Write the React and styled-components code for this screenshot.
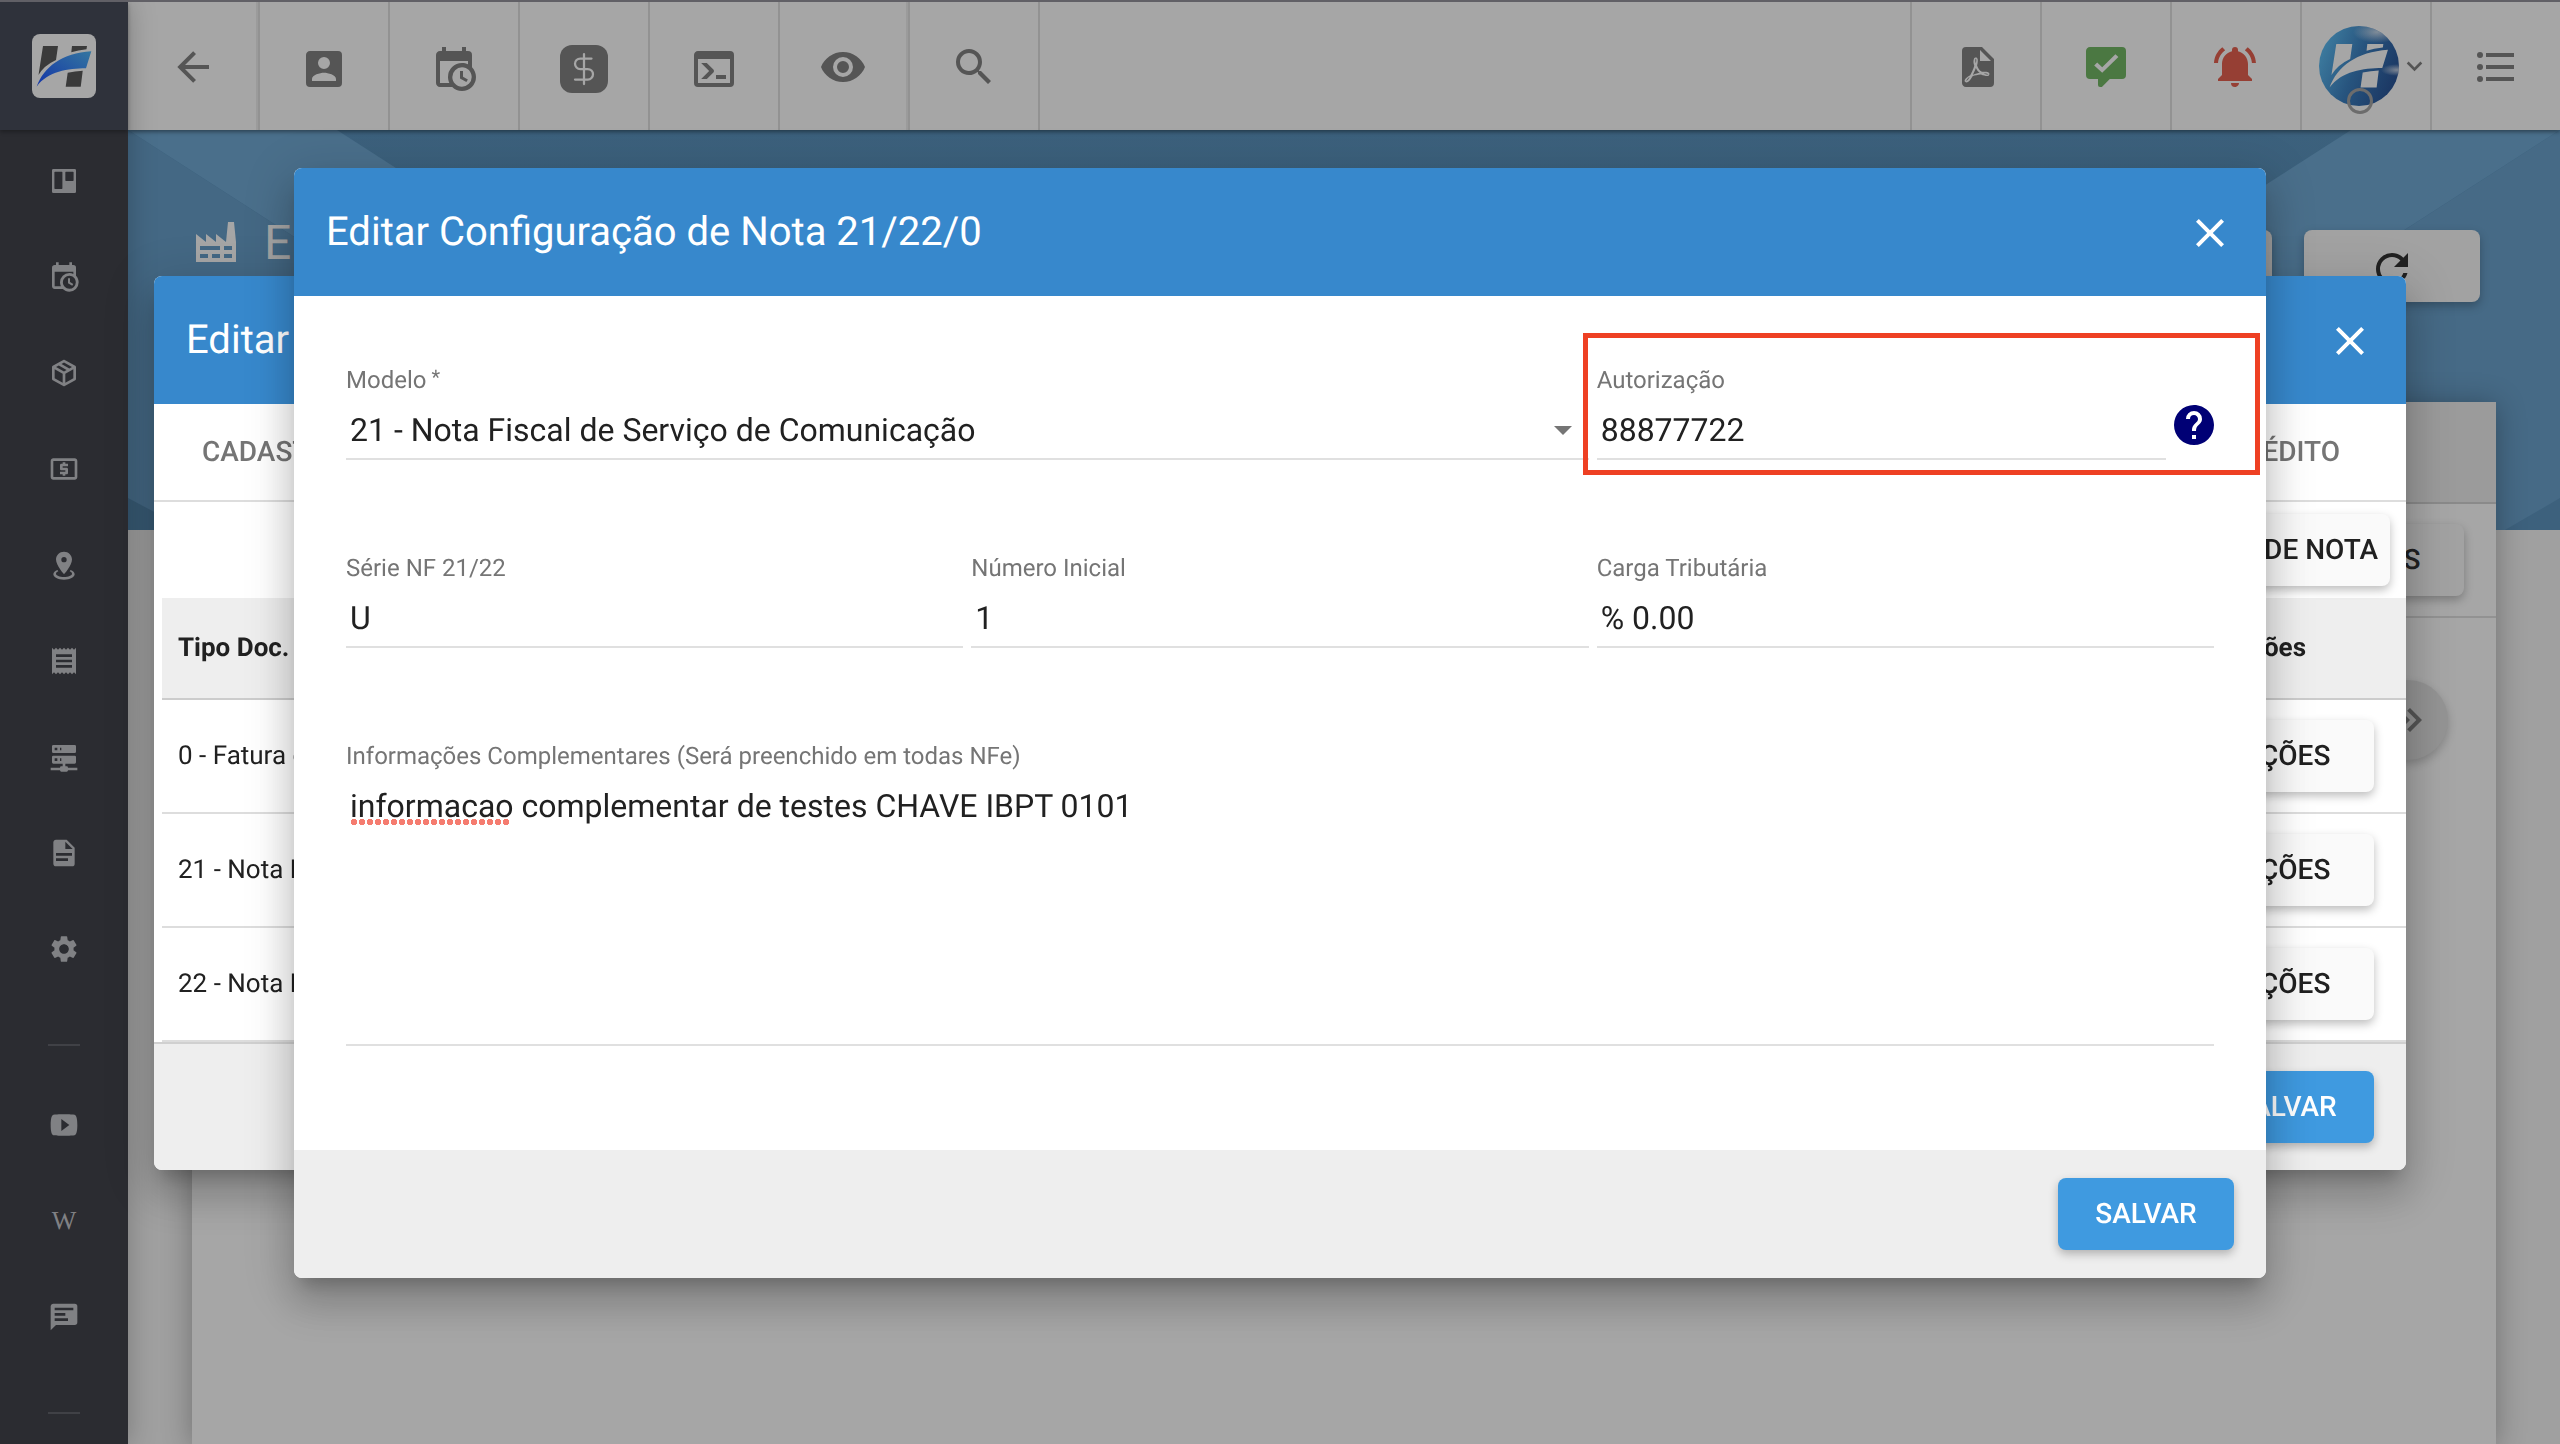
import React, { useState } from "react";
import styled, { createGlobalStyle } from "styled-components";
import { DollarSign } from "lucide-react";
import { MdLocalAtm, MdReceipt, MdSettings } from "react-icons/md";

const GlobalStyle = createGlobalStyle`
  * {
    box-sizing: border-box;
  }
  body {
    margin: 0;
    background: #a0a0a0;
    color: #212121;
    font-family: Roboto, "Liberation Sans", sans-serif;
    font-size: 26px;
    text-rendering: geometricPrecision;
  }
  button, input, select, textarea {
    font-family: inherit;
    color: inherit;
    text-rendering: inherit;
  }
`;

const icons = {
  back: "M20,11V13H8L13.5,18.5L12.08,19.92L4.16,12L12.08,4.08L13.5,5.5L8,11H20Z",
  account:
    "M6,17C6,15 10,13.9 12,13.9C14,13.9 18,15 18,17V18H6M15,9A3,3 0 0,1 12,12A3,3 0 0,1 9,9A3,3 0 0,1 12,6A3,3 0 0,1 15,9M3,5V19A2,2 0 0,0 5,21H19A2,2 0 0,0 21,19V5A2,2 0 0,0 19,3H5C3.89,3 3,3.9 3,5Z",
  calendar:
    "M15,13H16.5V15.82L18.94,17.23L18.19,18.53L15,16.69V13M19,8H5V19H9.67C9.24,18.09 9,17.07 9,16A7,7 0 0,1 16,9C17.07,9 18.09,9.24 19,9.67V8M5,21C3.89,21 3,20.1 3,19V5C3,3.89 3.89,3 5,3H6V1H8V3H16V1H18V3H19A2,2 0 0,1 21,5V11.1C22.24,12.36 23,14.09 23,16A7,7 0 0,1 16,23C14.09,23 12.36,22.24 11.1,21H5M16,11.15A4.85,4.85 0 0,0 11.15,16C11.15,18.68 13.32,20.85 16,20.85A4.85,4.85 0 0,0 20.85,16C20.85,13.32 18.68,11.15 16,11.15Z",
  console:
    "M20,19V7H4V19H20M20,3A2,2 0 0,1 22,5V19A2,2 0 0,1 20,21H4A2,2 0 0,1 2,19V5C2,3.89 2.9,3 4,3H20M13,17V15H18V17H13M9.58,13L5.57,9H8.4L11.7,12.3C12.09,12.69 12.09,13.33 11.7,13.72L8.42,17H5.59L9.58,13Z",
  eye: "M12,9A3,3 0 0,0 9,12A3,3 0 0,0 12,15A3,3 0 0,0 15,12A3,3 0 0,0 12,9M12,17A5,5 0 0,1 7,12A5,5 0 0,1 12,7A5,5 0 0,1 17,12A5,5 0 0,1 12,17M12,4.5C7,4.5 2.73,7.61 1,12C2.73,16.39 7,19.5 12,19.5C17,19.5 21.27,16.39 23,12C21.27,7.61 17,4.5 12,4.5Z",
  search:
    "M9.5,3A6.5,6.5 0 0,1 16,9.5C16,11.11 15.41,12.59 14.44,13.73L14.71,14H15.5L20.5,19L19,20.5L14,15.5V14.71L13.73,14.44C12.59,15.41 11.11,16 9.5,16A6.5,6.5 0 0,1 3,9.5A6.5,6.5 0 0,1 9.5,3M9.5,5C7,5 5,7 5,9.5C5,12 7,14 9.5,14C12,14 14,12 14,9.5C14,7 12,5 9.5,5Z",
  pdf: "M14,9H19.5L14,3.5V9M7,2H15L21,8V20A2,2 0 0,1 19,22H7C5.89,22 5,21.1 5,20V4A2,2 0 0,1 7,2M11.93,12.44C12.34,13.34 12.86,14.08 13.46,14.59L13.87,14.91C13,15.07 11.8,15.35 10.53,15.84V15.84L10.42,15.88L10.92,14.84C11.37,13.97 11.7,13.18 11.93,12.44M18.41,16.25C18.59,16.07 18.68,15.84 18.69,15.59C18.72,15.39 18.67,15.2 18.57,15.04C18.28,14.57 17.53,14.35 16.29,14.35L15,14.42L14.13,13.84C13.5,13.32 12.93,12.41 12.53,11.28L12.57,11.14C12.9,9.81 13.21,8.2 12.55,7.54C12.39,7.38 12.17,7.3 11.94,7.3H11.7C11.33,7.3 11,7.69 10.91,8.07C10.54,9.4 10.76,10.13 11.13,11.34V11.35C10.88,12.23 10.56,13.25 10.05,14.28L9.09,16.08L8.2,16.57C7,17.32 6.43,18.16 6.32,18.69C6.28,18.88 6.3,19.05 6.37,19.23L6.4,19.28L6.88,19.59L7.32,19.7C8.13,19.7 9.05,18.75 10.29,16.63L10.47,16.56C11.5,16.23 12.78,16 14.5,15.81C15.53,16.32 16.74,16.55 17.5,16.55C17.94,16.55 18.24,16.44 18.41,16.25M18,15.54L18.09,15.65C18.08,15.75 18.05,15.76 18,15.78H17.96L17.77,15.8C17.31,15.8 16.6,15.61 15.87,15.29C15.96,15.19 16,15.19 16.1,15.19C17.5,15.19 17.9,15.44 18,15.54M8.83,17C8.18,18.19 7.59,18.85 7.14,19C7.19,18.62 7.64,17.96 8.35,17.31L8.83,17M11.85,10.09C11.62,9.19 11.61,8.46 11.78,8.04L11.85,7.92L12,7.97C12.17,8.21 12.19,8.53 12.09,9.07L12.06,9.23L11.9,10.05L11.85,10.09Z",
  check:
    "M9,22A1,1 0 0,1 8,21V18H4A2,2 0 0,1 2,16V4C2,2.89 2.9,2 4,2H20A2,2 0 0,1 22,4V16A2,2 0 0,1 20,18H13.9L10.2,21.71C10,21.9 9.75,22 9.5,22H9M10.1,14.9L18.2,7L16.7,5.6L10.1,12.1L7.6,9.8L6.1,11.2Z",
  bell: "M11.5,22C11.64,22 11.77,22 11.9,21.96C12.55,21.82 13.09,21.38 13.34,20.78C13.44,20.54 13.5,20.27 13.5,20H9.5A2,2 0 0,0 11.5,22M18,10.5C18,7.43 15.86,4.86 13,4.18V3.5A1.5,1.5 0 0,0 11.5,2A1.5,1.5 0 0,0 10,3.5V4.18C7.13,4.86 5,7.43 5,10.5V16L3,18V19H20V18L18,16M19.97,10H21.97C21.82,6.79 20.24,3.97 17.85,2.15L16.42,3.58C18.46,5 19.82,7.35 19.97,10M6.58,3.58L5.15,2.15C2.76,3.97 1.18,6.79 1,10H3C3.18,7.35 4.54,5 6.58,3.58Z",
  down: "M7.41,8.58L12,13.17L16.59,8.58L18,10L12,16L6,10L7.41,8.58Z",
  list: "M7,5H21V7H7V5M7,13V11H21V13H7M4,4.5A1.5,1.5 0 0,1 5.5,6A1.5,1.5 0 0,1 4,7.5A1.5,1.5 0 0,1 2.5,6A1.5,1.5 0 0,1 4,4.5M4,10.5A1.5,1.5 0 0,1 5.5,12A1.5,1.5 0 0,1 4,13.5A1.5,1.5 0 0,1 2.5,12A1.5,1.5 0 0,1 4,10.5M7,19V17H21V19H7M4,16.5A1.5,1.5 0 0,1 5.5,18A1.5,1.5 0 0,1 4,19.5A1.5,1.5 0 0,1 2.5,18A1.5,1.5 0 0,1 4,16.5Z",
  close:
    "M19,6.41L17.59,5L12,10.59L6.41,5L5,6.41L10.59,12L5,17.59L6.41,19L12,13.41L17.59,19L19,17.59L13.41,12L19,6.41Z",
  refresh:
    "M17.65,6.35C16.2,4.9 14.21,4 12,4A8,8 0 0,0 4,12A8,8 0 0,0 12,20C15.73,20 18.84,17.45 19.73,14H17.65C16.83,16.33 14.61,18 12,18A6,6 0 0,1 6,12A6,6 0 0,1 12,6C13.66,6 15.14,6.69 16.22,7.78L13,11H20V4L17.65,6.35Z",
  factory:
    "M4,18V20H8V18H4M4,14V16H14V14H4M10,18V20H14V18H10M16,14V16H20V14H16M16,18V20H20V18H16M2,22V8L7,12V8L12,12V8L17,12L18,2H21L22,12V22H2Z",
  help: "M15.07,11.25L14.17,12.17C13.45,12.89 13,13.5 13,15H11V14.5C11,13.39 11.45,12.39 12.17,11.67L13.41,10.41C13.78,10.05 14,9.55 14,9C14,7.89 13.1,7 12,7A2,2 0 0,0 10,9H8A4,4 0 0,1 12,5A4,4 0 0,1 16,9C16,9.88 15.64,10.67 15.07,11.25M13,19H11V17H13M12,2A10,10 0 0,0 2,12A10,10 0 0,0 12,22A10,10 0 0,0 22,12C22,6.47 17.5,2 12,2Z",
  next: "M5.59,7.41L7,6L13,12L7,18L5.59,16.59L10.17,12L5.59,7.41M11.59,7.41L13,6L19,12L13,18L11.59,16.59L16.17,12L11.59,7.41Z",
  board:
    "M4,3H20A1,1 0 0,1 21,4V20A1,1 0 0,1 20,21H4A1,1 0 0,1 3,20V4A1,1 0 0,1 4,3M5.3,5A.5,.5 0 0,0 4.8,5.5V17.5A.5,.5 0 0,0 5.3,18H10.3A.5,.5 0 0,0 10.8,17.5V5.5A.5,.5 0 0,0 10.3,5H5.3M13.5,5A.5,.5 0 0,0 13,5.5V11.5A.5,.5 0 0,0 13.5,12H18.7A.5,.5 0 0,0 19.2,11.5V5.5A.5,.5 0 0,0 18.7,5H13.5Z",
  box: "M21,16.5C21,16.88 20.79,17.21 20.47,17.38L12.57,21.82C12.41,21.94 12.21,22 12,22C11.79,22 11.59,21.94 11.43,21.82L3.53,17.38C3.21,17.21 3,16.88 3,16.5V7.5C3,7.12 3.21,6.79 3.53,6.62L11.43,2.18C11.59,2.06 11.79,2 12,2C12.21,2 12.41,2.06 12.57,2.18L20.47,6.62C20.79,6.79 21,7.12 21,7.5V16.5M12,4.15L10.11,5.22L16,8.61L17.96,7.5L12,4.15M6.04,7.5L12,10.85L13.96,9.75L8.08,6.35L6.04,7.5M5,15.91L11,19.29V12.58L5,9.21V15.91M19,15.91V9.21L13,12.58V19.29L19,15.91Z",
  marker:
    "M12,2C15.31,2 18,4.66 18,7.95C18,12.41 12,19 12,19C12,19 6,12.41 6,7.95C6,4.66 8.69,2 12,2M12,6A2,2 0 0,0 10,8A2,2 0 0,0 12,10A2,2 0 0,0 14,8A2,2 0 0,0 12,6M20,19C20,21.21 16.42,23 12,23C7.58,23 4,21.21 4,19C4,17.71 5.22,16.56 7.11,15.83L7.75,16.74C6.67,17.19 6,17.81 6,18.5C6,19.88 8.69,21 12,21C15.31,21 18,19.88 18,18.5C18,17.81 17.33,17.19 16.25,16.74L16.89,15.83C18.78,16.56 20,17.71 20,19Z",
  server:
    "M13,19H14A1,1 0 0,1 15,20H22V22H15A1,1 0 0,1 14,23H10A1,1 0 0,1 9,22H2V20H9A1,1 0 0,1 10,19H11V17H4A1,1 0 0,1 3,16V12A1,1 0 0,1 4,11H20A1,1 0 0,1 21,12V16A1,1 0 0,1 20,17H13V19M4,3H20A1,1 0 0,1 21,4V8A1,1 0 0,1 20,9H4A1,1 0 0,1 3,8V4A1,1 0 0,1 4,3M9,7H10V5H9V7M9,15H10V13H9V15M5,5V7H7V5H5M5,13V15H7V13H5Z",
  document:
    "M13,9H18.5L13,3.5V9M6,2H14L20,8V20A2,2 0 0,1 18,22H6C4.89,22 4,21.1 4,20V4C4,2.89 4.89,2 6,2M15,18V16H6V18H15M18,14V12H6V14H18Z",
  video:
    "M10,16.5V7.5L16,12M20,4.4C19.4,4.2 15.7,4 12,4C8.3,4 4.6,4.19 4,4.38C2.44,4.9 2,8.4 2,12C2,15.59 2.44,19.1 4,19.61C4.6,19.81 8.3,20 12,20C15.7,20 19.4,19.81 20,19.61C21.56,19.1 22,15.59 22,12C22,8.4 21.56,4.91 20,4.4Z",
  message:
    "M20,2A2,2 0 0,1 22,4V16A2,2 0 0,1 20,18H6L2,22V4C2,2.89 2.9,2 4,2H20M5,5V7H19V5H5M5,9V11H13V9H5M5,13V15H15V13H5Z",
};

const Icon = ({ name, size = 48, viewBox = "0 0 24 24" }) => (
  <svg
    width={size}
    height={size}
    viewBox={viewBox}
    fill="currentColor"
    fillRule="evenodd"
    aria-hidden="true"
  >
    <path d={icons[name]} />
  </svg>
);

const LogoShape = ({ legs, swoosh }) => (
  <>
    <g fill={legs}>
      <path d="M11 12H26L24 26Q12 31.500 6.500 41Z" />
      <path d="M40 12H55L54.500 15.300Q46 16.200 39.300 18.300Z" />
      <path d="M35.700 38.700Q43 37.200 50.700 36.700L48.700 52.700H33.700Z" />
    </g>
    <path
      fill={swoosh}
      d="M4.700 52.700C12 32.500 30 19.500 59.300 17.300L54 34.300C36 34.500 16 37 4.700 52.700Z"
    />
  </>
);

const Page = styled.div`
  display: grid;
  grid-template-columns: 128px 1fr;
  height: 100vh;
  overflow: hidden;
  border-top: 2px solid #616066;
`;

const Sidebar = styled.aside`
  position: relative;
  z-index: 2;
  background: #2b2c31;
  color: #808184;
  box-shadow: 0 0 26px rgba(0, 0, 0, 0.25);
`;

const Brand = styled.a`
  display: flex;
  align-items: center;
  justify-content: center;
  height: 128px;
  background: #2f323b;
  box-shadow: 0 2px 4px rgba(0, 0, 0, 0.3);
`;

const BrandLogo = styled.svg`
  width: 64px;
  height: 64px;
  border-radius: 8px;
  background: #a6a6a6;
`;

const SideLink = styled.a`
  display: flex;
  align-items: center;
  justify-content: center;
  height: 96px;
  color: inherit;
  text-decoration: none;
  font: 26px "Liberation Serif", serif;
`;

const SideNav = styled.nav`
  padding-top: 3px;
`;

const SideDivider = styled.hr`
  width: 32px;
  height: 2px;
  margin: 47px auto 31px;
  border: 0;
  background: #404146;
`;

const Main = styled.main`
  display: flex;
  flex-direction: column;
  min-width: 0;
`;

const Topbar = styled.header`
  position: relative;
  z-index: 1;
  display: flex;
  justify-content: space-between;
  height: 128px;
  flex: none;
  padding-left: 2px;
  background: #a6a6a6;
  color: #555;
  box-shadow: 0 2px 4px rgba(0, 0, 0, 0.4);
`;

const BarGroup = styled.div`
  display: flex;
`;

const BarButton = styled.button`
  display: flex;
  align-items: center;
  justify-content: center;
  width: 130px;
  height: 128px;
  padding: ${(p) => (p.$low ? "6px 0 0" : p.$raised ? "2px 2px 0 0" : "2px 0 0")};
  border: 0 solid #929292;
  border-width: ${(p) => (p.$end ? "0 0 0 2px" : "0 2px 0 0")};
  background: none;
  color: ${(p) => p.$color || "inherit"};
  box-shadow: ${(p) => (p.$raised ? "inset -2px 0 0 #9b9b9b" : "none")};
`;

const DollarBadge = styled.span`
  display: flex;
  align-items: center;
  justify-content: center;
  width: 48px;
  height: 48px;
  border-radius: 12px;
  background: #555;
  color: #a6a6a6;
`;

const Profile = styled(BarButton)`
  position: relative;
  justify-content: flex-start;
  padding: 0 0 0 17px;
`;

const Avatar = styled.svg`
  flex: none;
  width: 80px;
  height: 80px;
  border-radius: 50%;
`;

const Status = styled.span`
  position: absolute;
  left: 45px;
  bottom: 16px;
  width: 26px;
  height: 26px;
  border: 3px solid #6c6c6c;
  border-radius: 50%;
`;

const Hero = styled.section`
  position: relative;
  height: 400px;
  flex: none;
  background: linear-gradient(#3c617d, #33536a);
`;

const HeroArt = styled.svg`
  position: absolute;
  inset: 0;
  width: 100%;
  height: 100%;
`;

const HeroBar = styled.div`
  position: relative;
  display: flex;
  justify-content: space-between;
  padding: 100px 80px 0 64px;
`;

const PageTitle = styled.h1`
  display: flex;
  align-items: center;
  gap: 24px;
  height: 24px;
  margin: 0;
  color: #a6a6a6;
  font-size: 48px;
  font-weight: 400;
`;

const Actions = styled.div`
  display: flex;
  gap: 32px;
`;

const Button = styled.button`
  display: inline-flex;
  align-items: center;
  justify-content: center;
  min-width: 176px;
  height: 72px;
  padding: ${(p) => (p.$icon ? "6px 12px 0" : "0 12px 2px")};
  border: 0;
  border-radius: 8px;
  background: ${(p) => (p.$primary ? "#3f9ae0" : p.$dim ? "#a2a2a2" : "#fafafa")};
  color: ${(p) => (p.$primary ? "#fff" : "#212121")};
  box-shadow: 0 4px 10px rgba(0, 0, 0, 0.26);
  font-size: 28px;
  font-weight: 500;
`;

const Card = styled.section`
  position: relative;
  flex: 1;
  margin: -128px 64px 0;
  background: #a6a6a6;
  box-shadow: 0 2px 28px rgba(0, 0, 0, 0.3);
`;

const CardTabs = styled.div`
  height: 102px;
  border-bottom: 2px solid #8a8a8a;
  background: #9b9b9b;
`;

const CardTools = styled.div`
  display: flex;
  justify-content: flex-end;
  padding: 20px 32px;
  border-bottom: 2px solid #929292;
`;

const CardPager = styled.div`
  display: flex;
  justify-content: flex-end;
  padding: 62px 48px;
`;

const RoundButton = styled.button`
  display: flex;
  align-items: center;
  justify-content: center;
  width: 80px;
  height: 80px;
  padding: 0;
  border: 0;
  border-radius: 50%;
  background: #949494;
  color: #555;
  box-shadow: 0 4px 10px rgba(0, 0, 0, 0.2);
`;

const Overlay = styled.div`
  position: fixed;
  inset: 2px 0 0;
  z-index: 3;
  display: flex;
  align-items: center;
  padding: 0 ${(p) => p.$side}px;
`;

const Dialog = styled.div`
  flex: 1;
  overflow: hidden;
  border-radius: 8px;
  background: #fff;
  box-shadow: 0 14px 16px -8px rgba(0, 0, 0, 0.2),
    0 26px 38px 4px rgba(0, 0, 0, 0.14), 0 10px 48px 8px rgba(0, 0, 0, 0.12);
`;

const DialogHeader = styled.header`
  display: flex;
  align-items: center;
  justify-content: space-between;
  height: 128px;
  padding: 0 32px;
  background: #3788cc;
  color: #fff;
`;

const DialogTitle = styled.h2`
  margin: 0;
  padding-bottom: 2px;
  font-size: 40px;
  font-weight: 400;
`;

const CloseButton = styled.button`
  display: flex;
  padding: 2px 0 0;
  border: 0;
  background: none;
`;

const DialogFooter = styled.footer`
  display: flex;
  align-items: center;
  justify-content: flex-end;
  height: 128px;
  padding: 0 32px;
  border-top: ${(p) => (p.$line ? "2px solid #d0d0d0" : "0")};
  background: #eee;
`;

const Tabs = styled.div`
  display: flex;
  justify-content: space-between;
  height: 98px;
  padding: 0 66px 2px 48px;
  border-bottom: 2px solid #ddd;
`;

const Tab = styled.button`
  padding: 0;
  border: 0;
  background: none;
  color: #757575;
  font-size: 28px;
  font-weight: 500;
`;

const TableTools = styled.div`
  display: flex;
  justify-content: flex-end;
  padding: 12px 16px;
`;

const TableArea = styled.div`
  padding-left: 8px;
`;

const Table = styled.table`
  width: 100%;
  border-collapse: separate;
  border-spacing: 0;
  text-align: left;

  th {
    height: 102px;
    padding: 0 16px;
    border-bottom: 2px solid #ccc;
    background: #eee;
  }
  td {
    height: 114px;
    padding: 0 16px;
    border-bottom: 2px solid #ddd;
  }
  th:last-child {
    width: 320px;
    padding-right: 100px;
    text-align: right;
  }
  td:last-child {
    padding-right: 32px;
    text-align: right;
  }
  ${Button} {
    vertical-align: middle;
  }
`;

const Form = styled.form`
  display: grid;
  grid-template-columns: repeat(3, 1fr);
  gap: 92px 8px;
  padding: 68px 52px 104px;
`;

const Field = styled.div`
  position: relative;
  display: flex;
  flex-direction: column;
  grid-column: span ${(p) => p.$span || 1};
  min-width: 0;
`;

const Label = styled.label`
  margin-bottom: 8px;
  color: #757575;
  font-size: 24px;
  line-height: 32px;
`;

const Required = styled.span`
  margin-left: 5px;
  font-size: 20px;
  vertical-align: top;
  line-height: 26px;
`;

const Input = styled.input`
  width: 100%;
  height: 56px;
  padding: 0 4px 2px;
  border: 0;
  border-bottom: 2px solid #e0e0e0;
  border-radius: 0;
  outline: 0;
  background: none;
  font-size: 32px;
`;

const Select = styled(Input)`
  appearance: none;
`;

const TextArea = styled(Input)`
  display: block;
  height: 266px;
  padding-top: 6px;
  line-height: 40px;
  resize: none;
`;

const Control = styled.div`
  position: relative;
  display: flex;
  gap: 8px;
`;

const Caret = styled.span`
  position: absolute;
  right: 17px;
  top: 22px;
  border: 9px solid transparent;
  border-top-color: #757575;
  border-bottom: 0;
  pointer-events: none;
`;

const HelpButton = styled.button`
  flex: none;
  display: flex;
  padding: 1px 0 0;
  border: 0;
  background: none;
  color: #000075;
`;

const Highlight = styled.span`
  position: absolute;
  inset: -31px -46px -15px -14px;
  border: 5px solid #ee4023;
  pointer-events: none;
`;

// dotted spell-check mark under the first word
const SpellMark = styled.span`
  position: absolute;
  left: 4px;
  top: 39px;
  width: 160px;
  height: 6px;
  background: radial-gradient(circle, #f57c70 3px, transparent 3px) 0 0 / 8px
    6px;
  pointer-events: none;
`;

const rows = ["0 - Fatura de Serviço", "21 - Nota Fiscal", "22 - Nota Fiscal"];

const sideIcons = [
  <Icon name="board" size={32} />,
  <Icon name="calendar" size={32} />,
  <Icon name="box" size={32} />,
  <MdLocalAtm size={32} />,
  <Icon name="marker" size={32} />,
  <MdReceipt size={32} />,
  <Icon name="server" size={32} />,
  <Icon name="document" size={32} />,
  <MdSettings size={32} />,
];

const helpIcons = [
  <Icon name="video" size={32} />,
  "W",
  <Icon name="message" size={32} />,
];

const SideBar = () => (
  <Sidebar>
    <Brand href="#" aria-label="Início">
      <BrandLogo viewBox="0 0 64 64">
        <defs>
          <linearGradient id="swoosh" x1="0" y1="1" x2="1" y2="0">
            <stop offset="0" stopColor="#1334a8" />
            <stop offset="1" stopColor="#3476a0" />
          </linearGradient>
        </defs>
        <LogoShape legs="#3a3a3a" swoosh="url(#swoosh)" />
      </BrandLogo>
    </Brand>
    <SideNav>
      {sideIcons.map((icon, i) => (
        <SideLink href="#" key={i}>
          {icon}
        </SideLink>
      ))}
      <SideDivider />
      {helpIcons.map((icon, i) => (
        <SideLink href="#" key={i}>
          {icon}
        </SideLink>
      ))}
      <SideDivider />
    </SideNav>
  </Sidebar>
);

const TopBar = () => (
  <Topbar>
    <BarGroup>
      <BarButton $raised aria-label="Voltar">
        <Icon name="back" />
      </BarButton>
      <BarButton $low aria-label="Clientes">
        <Icon name="account" />
      </BarButton>
      <BarButton $low aria-label="Agenda">
        <Icon name="calendar" />
      </BarButton>
      <BarButton $low aria-label="Financeiro">
        <DollarBadge>
          <DollarSign size={36} strokeWidth={1.5} />
        </DollarBadge>
      </BarButton>
      <BarButton $low aria-label="Console">
        <Icon name="console" />
      </BarButton>
      <BarButton $raised aria-label="Visualizar">
        <Icon name="eye" />
      </BarButton>
      <BarButton aria-label="Buscar">
        <Icon name="search" />
      </BarButton>
    </BarGroup>
    <BarGroup>
      <BarButton $end aria-label="PDF">
        <Icon name="pdf" />
      </BarButton>
      <BarButton $end $color="#4b7842" aria-label="Mensagens">
        <Icon name="check" />
      </BarButton>
      <BarButton $end $color="#963f34" aria-label="Notificações">
        <Icon name="bell" />
      </BarButton>
      <Profile $end aria-label="Perfil">
        <Avatar viewBox="0 0 80 80">
          <defs>
            <linearGradient id="globe" x1="0" y1="0.2" x2="1" y2="0.6">
              <stop offset="0" stopColor="#3f7fa2" />
              <stop offset="0.5" stopColor="#27547e" />
              <stop offset="1" stopColor="#1b3763" />
            </linearGradient>
            <radialGradient id="glow">
              <stop offset="0" stopColor="#a6a6a6" stopOpacity="0.7" />
              <stop offset="1" stopColor="#a6a6a6" stopOpacity="0" />
            </radialGradient>
          </defs>
          <rect width="80" height="80" fill="url(#globe)" />
          <ellipse cx="58" cy="6" rx="24" ry="11" fill="url(#glow)" />
          <ellipse cx="78" cy="44" rx="16" ry="6" fill="url(#glow)" />
          <g transform="translate(5.5 5.2) scale(1.07)">
            <LogoShape legs="#a6a6a6" swoosh="#a6a6a6" />
          </g>
        </Avatar>
        <Icon name="down" size={32} />
        <Status />
      </Profile>
      <BarButton $end aria-label="Menu">
        <Icon name="list" />
      </BarButton>
    </BarGroup>
  </Topbar>
);

const CompanyPage = () => (
  <>
    <Hero>
      <HeroArt viewBox="0 0 2432 400" preserveAspectRatio="none">
        <path fill="#4a6f8b" d="M0 0H209L830 400H622Z" />
        <path fill="#446884" d="M0 0L622 400H0Z" />
        <path fill="#385b75" d="M0 368L60 400H0Z" />
        <path fill="#4a6f8b" d="M2432 0H2223L1600 400H1810Z" />
        <path fill="#466a86" d="M2432 0V400H1810Z" />
        <path fill="#3d617d" d="M2432 368V400H2377Z" />
      </HeroArt>
      <HeroBar>
        <PageTitle>
          <Icon name="factory" />
          Empresas
        </PageTitle>
        <Actions>
          <Button $dim>VOLTAR</Button>
          <Button $dim $icon aria-label="Atualizar">
            <Icon name="refresh" />
          </Button>
        </Actions>
      </HeroBar>
    </Hero>
    <Card>
      <CardTabs />
      <CardTools>
        <Button $dim>AÇÕES</Button>
      </CardTools>
      <CardPager>
        <RoundButton aria-label="Próxima página">
          <Icon name="next" />
        </RoundButton>
      </CardPager>
    </Card>
  </>
);

const CompanyDialog = () => (
  <Overlay $side={154}>
    <Dialog role="dialog" aria-label="Editar Empresa">
      <DialogHeader>
        <DialogTitle>Editar Empresa</DialogTitle>
        <CloseButton aria-label="Fechar">
          <Icon name="close" />
        </CloseButton>
      </DialogHeader>
      <Tabs>
        <Tab>CADASTRO</Tab>
        <Tab>CARTÃO DE CRÉDITO</Tab>
      </Tabs>
      <TableTools>
        <Button>ADICIONAR CONFIGURAÇÃO DE NOTA</Button>
      </TableTools>
      <TableArea>
        <Table>
          <thead>
            <tr>
              <th>Tipo Doc.</th>
              <th>Ações</th>
            </tr>
          </thead>
          <tbody>
            {rows.map((row) => (
              <tr key={row}>
                <td>{row}</td>
                <td>
                  <Button>AÇÕES</Button>
                </td>
              </tr>
            ))}
          </tbody>
        </Table>
      </TableArea>
      <DialogFooter $line>
        <Button $primary>SALVAR</Button>
      </DialogFooter>
    </Dialog>
  </Overlay>
);

const InvoiceDialog = () => {
  const [values, setValues] = useState({
    modelo: "21",
    autorizacao: "88877722",
    serie: "U",
    numero: "1",
    carga: "% 0.00",
    info: "informacao complementar de testes CHAVE IBPT 0101",
  });

  const bind = (id) => ({
    id,
    value: values[id],
    onChange: (e) => setValues({ ...values, [id]: e.target.value }),
  });

  return (
    <Overlay $side={294}>
      <Dialog role="dialog" aria-labelledby="invoice-title">
        <DialogHeader>
          <DialogTitle id="invoice-title">
            Editar Configuração de Nota 21/22/0
          </DialogTitle>
          <CloseButton aria-label="Fechar">
            <Icon name="close" />
          </CloseButton>
        </DialogHeader>
        <Form id="invoice-form" onSubmit={(e) => e.preventDefault()}>
          <Field $span={2}>
            <Label htmlFor="modelo">
              Modelo<Required>*</Required>
            </Label>
            <Control>
              <Select as="select" {...bind("modelo")}>
                <option value="21">
                  21 - Nota Fiscal de Serviço de Comunicação
                </option>
              </Select>
              <Caret />
            </Control>
          </Field>
          <Field>
            <Label htmlFor="autorizacao">Autorização</Label>
            <Control>
              <Input {...bind("autorizacao")} />
              <HelpButton type="button" aria-label="Ajuda">
                <Icon name="help" size={40} viewBox="2 2 20 20" />
              </HelpButton>
            </Control>
            <Highlight />
          </Field>
          <Field>
            <Label htmlFor="serie">Série NF 21/22</Label>
            <Input {...bind("serie")} />
          </Field>
          <Field>
            <Label htmlFor="numero">Número Inicial</Label>
            <Input {...bind("numero")} />
          </Field>
          <Field>
            <Label htmlFor="carga">Carga Tributária</Label>
            <Input {...bind("carga")} />
          </Field>
          <Field $span={3}>
            <Label htmlFor="info">
              Informações Complementares (Será preenchido em todas NFe)
            </Label>
            <Control>
              <TextArea as="textarea" spellCheck={false} {...bind("info")} />
              <SpellMark />
            </Control>
          </Field>
        </Form>
        <DialogFooter>
          <Button $primary form="invoice-form">
            SALVAR
          </Button>
        </DialogFooter>
      </Dialog>
    </Overlay>
  );
};

const App = () => (
  <>
    <GlobalStyle />
    <Page>
      <SideBar />
      <Main>
        <TopBar />
        <CompanyPage />
      </Main>
    </Page>
    <CompanyDialog />
    <InvoiceDialog />
  </>
);

export default App;
